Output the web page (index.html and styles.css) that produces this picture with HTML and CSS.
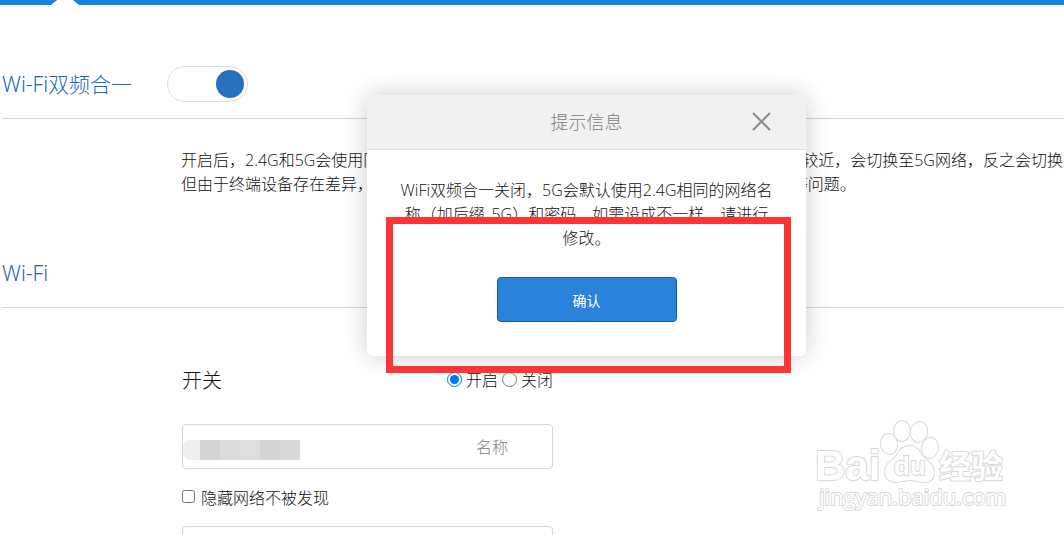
FILE: index.html
```html
<!doctype html>
<html lang="zh-CN">
    <head>
        <meta charset="utf-8">
        <title>Wi-Fi设置</title>
        <link rel="stylesheet" href="styles.css">
    </head>
    <body>
        <header class="topbar"><span class="topbar-arrow"></span></header>

        <main class="content">

            <section class="section">
                <div class="section-title">
                    <h2 id="dual-title">Wi-Fi双频合一</h2>
                    <input class="switch" type="checkbox" role="switch" aria-labelledby="dual-title" checked>
                </div>
                <p class="note">开启后，2.4G和5G会使用同一个名称，优先选择最佳的 Wi-Fi网络，终端与路由器的距离较近，会切换至5G网络，反之会切换至<br>但由于终端设备存在差异，部分设备可能出现切换不及时、连接中断或者Wi-Fi速度下降等问题。</p>
            </section>

            <section class="section">
                <div class="section-title">
                    <h2>Wi-Fi</h2>
                </div>
                <form class="wifi-form">
                    <div class="form-row">
                        <span class="row-name">开关</span>
                        <div class="radios">
                            <input type="radio" id="wifi-on" name="wifi" checked><label for="wifi-on">开启</label>
                            <input type="radio" id="wifi-off" name="wifi"><label for="wifi-off">关闭</label>
                        </div>
                    </div>
                    <div class="field">
                        <input type="text" id="ssid">
                        <label for="ssid">名称</label>
                        <div class="mosaic"><i></i><i></i><i></i><i></i><i></i><i></i></div>
                    </div>
                    <div class="check-row">
                        <input type="checkbox" id="hide-ssid"><label for="hide-ssid">隐藏网络不被发现</label>
                    </div>
                    <div class="field field-last">
                        <input type="text" aria-label="加密方式">
                    </div>
                </form>
            </section>

        </main>

        <div class="dialog" role="dialog" aria-labelledby="dialog-title">
            <div class="dialog-header">
                <h3 id="dialog-title">提示信息</h3>
                <button class="dialog-close" type="button" aria-label="关闭">
                    <svg width="20" height="20" viewBox="0 0 20 20"><path d="M1 1l17 17M18 1l-17 17" stroke="#8c8c8c" stroke-width="2" fill="none"/></svg>
                </button>
            </div>
            <div class="dialog-body">
                <p>WiFi双频合一关闭，5G会默认使用2.4G相同的网络名<br>称（加后缀_5G）和密码，如需设成不一样，请进行<br>修改。</p>
                <button class="btn-primary" type="button">确认</button>
            </div>
        </div>

        <div class="highlight"></div>

        <svg class="watermark" width="200" height="100" viewBox="0 0 200 100">
            <g class="mark-line">
                <text class="mark-bai" x="3" y="60">Bai</text>
                <ellipse cx="77" cy="24" rx="8" ry="10" transform="rotate(-8 77 24)"/>
                <ellipse cx="90" cy="11" rx="8" ry="10"/>
                <ellipse cx="107" cy="12" rx="8" ry="10" transform="rotate(12 107 12)"/>
                <ellipse cx="118" cy="28" rx="8" ry="10" transform="rotate(8 118 28)"/>
                <path d="M97 26c7 0 10 4 13 9 4 6 12 8 12 17 0 7-4 10-10 10-5 0-9-2-14-2s-9 2-14 2c-7 0-11-4-11-10 0-9 8-11 12-17 3-5 6-9 12-9z"/>
                <text class="mark-du" x="82" y="55">du</text>
                <text class="mark-cn" x="127" y="58">经验</text>
                <text class="mark-url" x="7" y="85">jingyan.baidu.com</text>
            </g>
        </svg>
    </body>
</html>
```
FILE: styles.css
```css
* {
    box-sizing: border-box;
}

body {
    position: relative;
    margin: 0;
    height: 100vh;
    overflow: hidden;
    background: #fff;
    color: #111;
    font: 16px/24px "Open Sans", "Noto Sans CJK SC", sans-serif;
    font-weight: 300;
}

h2,
h3,
p {
    margin: 0;
    font-weight: inherit;
}

input {
    margin: 0;
}

button {
    font-family: inherit;
    cursor: pointer;
}

.topbar {
    height: 5px;
    padding-left: 51px;
    background: #1782de;
}

.topbar-arrow {
    display: block;
    width: 28px;
    height: 5px;
    background: #fff;
    clip-path: polygon(22% 0, 78% 0, 100% 100%, 0 100%);
}

.content {
    padding-left: 2px;
}

.section-title {
    display: flex;
    align-items: center;
    gap: 35px;
    height: 70px;
    border-bottom: 1px solid #d5d5d5;
}

.section-title h2 {
    color: #1c68b8;
    font-family: "Noto Sans", "Noto Sans CJK SC", sans-serif;
    font-size: 21px;
}

.section:first-child {
    padding-top: 44px;
}

.switch {
    appearance: none;
    display: flex;
    align-items: center;
    justify-content: flex-end;
    width: 81px;
    height: 36px;
    padding-right: 3px;
    border: 1px solid #ddd;
    border-radius: 18px;
}

.switch::before {
    content: "";
    width: 28px;
    height: 28px;
    border-radius: 50%;
    background: #2672bf;
}

.note {
    margin: 29px 0 42px 179px;
    white-space: nowrap;
}

.wifi-form {
    width: 371px;
    margin: 60px 0 0 180px;
}

.form-row {
    display: flex;
    justify-content: space-between;
    align-items: center;
    height: 26px;
    margin-bottom: 30px;
}

.row-name {
    font-size: 20px;
}

.radios,
.check-row {
    display: flex;
    align-items: center;
}

.radios {
    align-self: flex-start;
}

.radios input {
    width: 15px;
    height: 15px;
    margin: 0 4px 2px;
}

.field {
    position: relative;
    display: flex;
    align-items: center;
    height: 45px;
    padding-right: 44px;
    border: 1px solid #d5d5d5;
    border-radius: 4px;
}

.field input {
    flex: 1;
    min-width: 0;
    height: 100%;
    border: 0;
    background: none;
    font: inherit;
}

.field label {
    color: #808080;
}

.mosaic {
    position: absolute;
    top: 15px;
    left: 0;
    display: flex;
}

.mosaic i {
    width: 20px;
    height: 20px;
    background: #dcdcdd;
}

.mosaic i:first-child {
    width: 17px;
    border-radius: 8px 0 0 8px;
    background: #efefef;
}

.mosaic i:nth-child(2),
.mosaic i:nth-child(5) {
    background: #d6d4d6;
}

.mosaic i:nth-child(4) {
    background: #dbdedd;
}

.mosaic i:last-child {
    background: #d9d9d9;
}

.check-row {
    gap: 6px;
    margin: 17px 0 16px;
}

.check-row input {
    margin-bottom: 3px;
}

/* dialog */
.dialog {
    position: absolute;
    top: 95px;
    left: 367px;
    width: 439px;
    border-radius: 5px;
    background: #fff;
    box-shadow: 0 0 24px rgba(0, 0, 0, .2);
}

.dialog-header {
    display: grid;
    grid-template-columns: 1fr auto 1fr;
    align-items: center;
    height: 55px;
    padding: 0 34px;
    border-bottom: 1px solid #e0e0e0;
    border-radius: 5px 5px 0 0;
    background: #f1f1f1;
}

.dialog-header h3 {
    grid-column: 2;
    color: #808080;
    font-size: 18px;
}

.dialog-close {
    justify-self: end;
    display: flex;
    padding: 0;
    border: 0;
    background: none;
}

.dialog-body {
    display: flex;
    flex-direction: column;
    align-items: center;
    gap: 27px;
    padding: 28px 30px 34px;
    text-align: center;
    white-space: nowrap;
}

.btn-primary {
    width: 180px;
    height: 45px;
    border: 1px solid #135ba8;
    border-radius: 4px;
    background: #2a82da;
    color: #fff;
    font-size: 14px;
    font-weight: 400;
}

.highlight {
    position: absolute;
    top: 217px;
    left: 386px;
    width: 405px;
    height: 156px;
    border: 7px solid #fc3636;
    pointer-events: none;
}

/* watermark */
.watermark {
    position: absolute;
    right: 52px;
    bottom: 15px;
}

.mark-line {
    fill: #fff;
    stroke: #d9d9d9;
    stroke-width: 2px;
    paint-order: stroke;
}

.mark-bai {
    font: bold 42px "Liberation Sans", sans-serif;
}

.mark-du {
    font: bold 26px "Liberation Sans", sans-serif;
}

.mark-cn {
    font: bold 32px "Noto Sans CJK SC", sans-serif;
}

.mark-url {
    font: 22px "Open Sans", sans-serif;
}
```
